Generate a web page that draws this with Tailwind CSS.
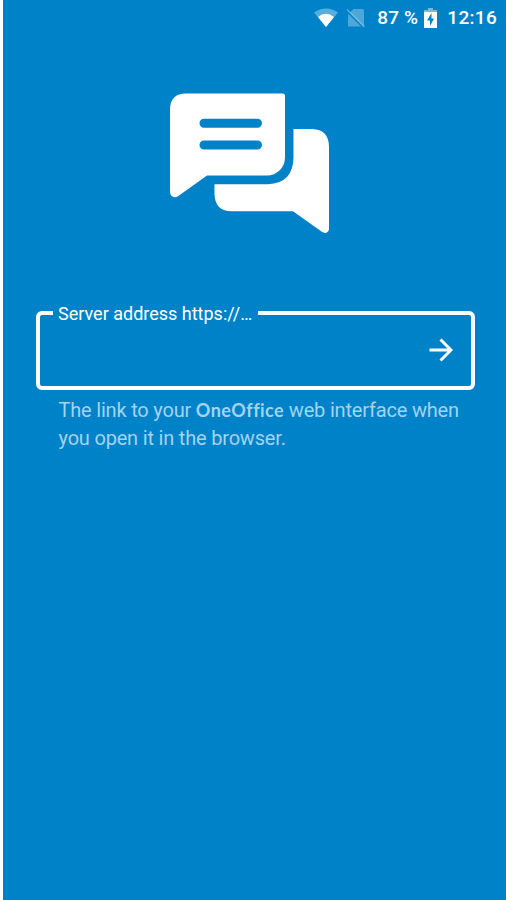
<!DOCTYPE html>
<html lang="en">
<head>
  <meta charset="UTF-8" />
  <meta name="viewport" content="width=device-width, initial-scale=1.0"/>
  <title>Server address</title>
  <script src="https://cdn.jsdelivr.net/npm/@tailwindcss/browser@4"></script>
</head>
<body class="h-[900px] overflow-hidden bg-white pl-[2.5px] font-[Roboto,sans-serif] text-white">
  <div class="h-full bg-[#0082c9]">

    <!-- status bar -->
    <header class="flex h-9 items-center justify-end pr-[9px] text-[19px] font-medium">
      <svg class="mr-[9px] h-5 w-6" viewBox="0 0 24 20">
        <path d="M0 4.500Q12-3.500 24 4.500L12 19Z" fill="#fff" fill-opacity=".35"/>
        <path d="M4 9Q12 2.500 20 9L12 19Z" fill="#fff"/>
      </svg>
      <svg class="mr-[12px] h-5 w-[18px]" viewBox="0 0 18 20">
        <path d="M1 6.500L6.500 1H15.500Q17 1 17 2.500V18.500H1Z" fill="#fff" fill-opacity=".3"/>
        <path d="M0 3L17 20" stroke="#0082c9" stroke-width="2"/>
        <path d="M0 1.500L17.500 19" stroke="#fff" stroke-opacity=".35" stroke-width="1.500"/>
      </svg>
      <span class="mr-[6px] tracking-[0.2px] whitespace-nowrap">87 %</span>
      <svg class="mr-[10px] h-5 w-[13px]" viewBox="0 0 13 20">
        <path d="M4 0H9V2H13V5H0V2H4Z" fill="#fff" fill-opacity=".45"/>
        <path d="M0 4H13V20H0Z" fill="#fff"/>
        <path d="M7.500 5L3 12.500H6V18L10 10.500H7.500Z" fill="#0082c9"/>
      </svg>
      <span class="tracking-[0.3px]">12:16</span>
    </header>

    <!-- logo -->
    <svg class="mt-[57px] ml-[167.500px] h-[140px] w-[160px]" viewBox="0 0 160 140" fill="#fff">
      <path d="M16 .5H112.500Q115 .5 115 3V64.500A18 18 0 0 1 97 82.500H37L8 103.300Q5 105 2.500 103.500Q0 102 0 99V17Q0 .5 16 .5Z"/>
      <path d="M123.500 36H142Q159 36.500 159 54V136Q159 139 156.500 139.800Q154 140.500 151.500 138.500L123 118.200H61Q45 118 44.500 101V91.300H98Q123.500 90 123.500 64Z"/>
      <path d="M34 30.300H87.500M34 52H87.500" stroke="#0082c9" stroke-width="9" stroke-linecap="round"/>
    </svg>

    <!-- server address field -->
    <main class="mt-[70px] ml-[33.500px] w-[439px]">
      <fieldset class="h-[87px] rounded-md border-4 border-white pl-[13px]">
        <legend class="h-5 pr-[6px] pl-[5px] text-[18px] leading-[21px] whitespace-nowrap">Server address https://…</legend>
        <div class="flex h-[53px] items-center justify-end pr-[18px]">
          <button aria-label="Connect">
            <svg class="h-6 w-6" viewBox="0 0 24 24" fill="none" stroke="#fff" stroke-width="3">
              <path d="M.5 12H22M11.500 1.500L22 12L11.500 22.500"/>
            </svg>
          </button>
        </div>
      </fieldset>
      <p class="mt-[6px] pl-[22.5px] text-[20px] leading-7 tracking-[-0.19px] whitespace-nowrap text-[#a3d3ee]">The link to your <span class="font-[Lato,sans-serif] text-[18px] leading-none font-bold tracking-[0.45px]">OneOffice</span> web interface when<br>you open it in the browser.</p>
    </main>
  </div>
</body>
</html>
